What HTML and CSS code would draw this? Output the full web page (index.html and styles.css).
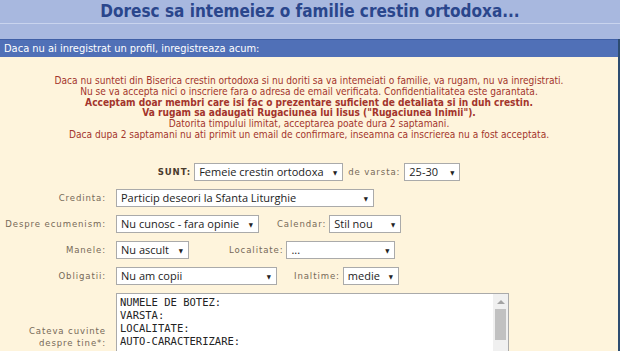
FILE: index.html
```html
<!DOCTYPE html>
<html lang="ro">
<head>
  <meta charset="utf-8">
  <title>Doresc sa intemeiez o familie crestin ortodoxa</title>
  <link rel="stylesheet" href="styles.css">
</head>
<body>
  <div class="top">
    <h1 class="title">Doresc sa intemeiez o familie crestin ortodoxa...</h1>
  </div>
  <div class="box">
    <div class="boxHead">Daca nu ai inregistrat un profil, inregistreaza acum:</div>
    <div class="boxBody">
      <p class="notice">
        Daca nu sunteti din Biserica crestin ortodoxa si nu doriti sa va intemeiati o familie, va rugam, nu va inregistrati.<br>
        Nu se va accepta nici o inscriere fara o adresa de email verificata. Confidentialitatea este garantata.<br>
        <b>Acceptam doar membri care isi fac o prezentare suficient de detaliata si in duh crestin.</b><br>
        <b>Va rugam sa adaugati Rugaciunea lui Iisus ("Rugaciunea Inimii").</b><br>
        Datorita timpului limitat, acceptarea poate dura 2 saptamani.<br>
        Daca dupa 2 saptamani nu ati primit un email de confirmare, inseamna ca inscrierea nu a fost acceptata.
      </p>
      <form class="signup">
        <div class="firstRow">
          <span class="lbl strong">SUNT:</span>
          <span class="sel wSunt"><select><option>Femeie crestin ortodoxa</option><option>Barbat crestin ortodox</option></select></span>
          <span class="lbl gapVarsta">de varsta:</span>
          <span class="sel wVarsta"><select><option>25-30</option></select></span>
        </div>
        <table class="fields">
          <colgroup><col class="colLabel"><col></colgroup>
          <tr>
            <td class="lbl lcol">Credinta:</td>
            <td><div class="line"><span class="sel wCredinta"><select><option>Particip deseori la Sfanta Liturghie</option></select></span></div></td>
          </tr>
          <tr>
            <td class="lbl lcol">Despre ecumenism:</td>
            <td><div class="line">
              <span class="sel wEcum"><select><option>Nu cunosc - fara opinie</option></select></span>
              <span class="lbl gapCal">Calendar:</span>
              <span class="sel wCal"><select><option>Stil nou</option><option>Stil vechi</option></select></span>
            </div></td>
          </tr>
          <tr>
            <td class="lbl lcol">Manele:</td>
            <td><div class="line">
              <span class="sel wManele"><select><option>Nu ascult</option></select></span>
              <span class="lbl gapLoc">Localitate:</span>
              <span class="sel wLoc"><select><option>...</option></select></span>
            </div></td>
          </tr>
          <tr>
            <td class="lbl lcol">Obligatii:</td>
            <td><div class="line">
              <span class="sel wOblig"><select><option>Nu am copii</option></select></span>
              <span class="lbl gapIn">Inaltime:</span>
              <span class="sel wIn"><select><option>medie</option></select></span>
            </div></td>
          </tr>
          <tr>
            <td class="lbl lcol">Cateva cuvinte<br>despre tine*:</td>
            <td>
              <div class="taWrap">
                <textarea class="about">NUMELE DE BOTEZ:
VARSTA:
LOCALITATE:
AUTO-CARACTERIZARE:


CE ASTEPT DE LA FAMILIE:


DUHOVNIC:


RUGACIUNEA LUI IISUS:
</textarea>
                <div class="fakeBar">
                  <div class="barUp"></div>
                  <div class="barThumb"></div>
                </div>
              </div>
            </td>
          </tr>
        </table>
      </form>
    </div>
  </div>
</body>
</html>
```

FILE: styles.css
```css
html,
body {
  margin: 0;
}

body {
  background-color: #fef4dc;
  font-family: "DejaVu Sans Condensed", "DejaVu Sans", sans-serif;
  font-stretch: condensed;
}

.top {
  height: 39px;
  background-color: #a8b8df;
}

.title {
  margin: 0;
  height: 23px;
  line-height: 23px;
  border-bottom: 1px solid #c9d4ee;
  text-align: center;
  font-size: 17px;
  color: #2a468c;
}

.box {
  border-right: 2px solid #2d4c70;
}

.boxHead {
  height: 17px;
  line-height: 17px;
  padding-left: 4px;
  border-top: 1px solid #3f5fa6;
  background-color: #5070b7;
  color: #fff;
  font-size: 11px;
}

.boxBody {
  padding: 19px 0 20px;
}

.notice {
  margin: 0;
  text-align: center;
  font-size: 10.1px;
  line-height: 10.8px;
  color: #a3352c;
}

.lbl {
  font-size: 9.5px;
  letter-spacing: 0.9px;
  color: #766958;
}

.strong {
  font-weight: bold;
  color: #4a3b2c;
}

.firstRow {
  display: flex;
  justify-content: center;
  align-items: center;
  height: 26px;
  margin-top: 18px;
}

.firstRow .sel {
  margin-left: 3px;
}

.gapVarsta {
  margin-left: 5px;
  margin-right: 1px;
}

/* fake native select */
.sel {
  position: relative;
  display: block;
}

.sel select {
  appearance: none;
  -webkit-appearance: none;
  display: block;
  box-sizing: border-box;
  width: 100%;
  height: 18px;
  margin: 0;
  padding: 0 14px 0 4px;
  border: 1px solid #aaa;
  border-radius: 0;
  background-color: #fff;
  font: 11px "Open Sans", sans-serif;
  color: #222;
  outline: none;
}

.sel::after {
  content: "▼";
  position: absolute;
  right: 6px;
  top: 50%;
  transform: translateY(-50%);
  font-size: 6px;
  color: #222;
  pointer-events: none;
}

.wSunt { width: 149px; }
.wVarsta { width: 56px; }
.wCredinta { width: 258px; }
.wEcum { width: 143px; }
.wCal { width: 72px; }
.wManele { width: 73px; }
.wLoc { width: 109px; }
.wOblig { width: 161px; }
.wIn { width: 56px; }

.fields {
  border-collapse: collapse;
  table-layout: fixed;
}

.colLabel {
  width: 116px;
}

.fields td {
  padding: 4px 0;
  vertical-align: middle;
}

.fields td.lcol {
  padding-right: 10px;
  text-align: right;
  white-space: nowrap;
  line-height: 12px;
}

.line {
  display: flex;
  align-items: center;
}

.gapCal {
  margin: 0 3px 0 18px;
}

.gapLoc {
  margin: 0 3px 0 40px;
}

.gapIn {
  margin: 0 3px 0 17px;
}

.taWrap {
  position: relative;
  width: 393px;
}

.about {
  display: block;
  box-sizing: border-box;
  width: 393px;
  height: 88px;
  margin: 0;
  padding: 2px 18px 2px 3px;
  border: 1px solid #aaa;
  background-color: #fff;
  font: 10.5px/13px "DejaVu Sans Mono", monospace;
  color: #222;
  resize: none;
  overflow: hidden;
}

/* scrollbars are hidden in the shot, so draw one */
.fakeBar {
  position: absolute;
  top: 1px;
  right: 1px;
  bottom: 1px;
  width: 15px;
  display: flex;
  flex-direction: column;
  align-items: center;
  background-color: #f0f0f0;
}

.barUp {
  width: 0;
  height: 0;
  margin: 6px 0 5px;
  border-left: 4px solid transparent;
  border-right: 4px solid transparent;
  border-bottom: 4px solid #a3a3a3;
}

.barThumb {
  width: 11px;
  height: 31px;
  background-color: #c1c1c1;
}
```
